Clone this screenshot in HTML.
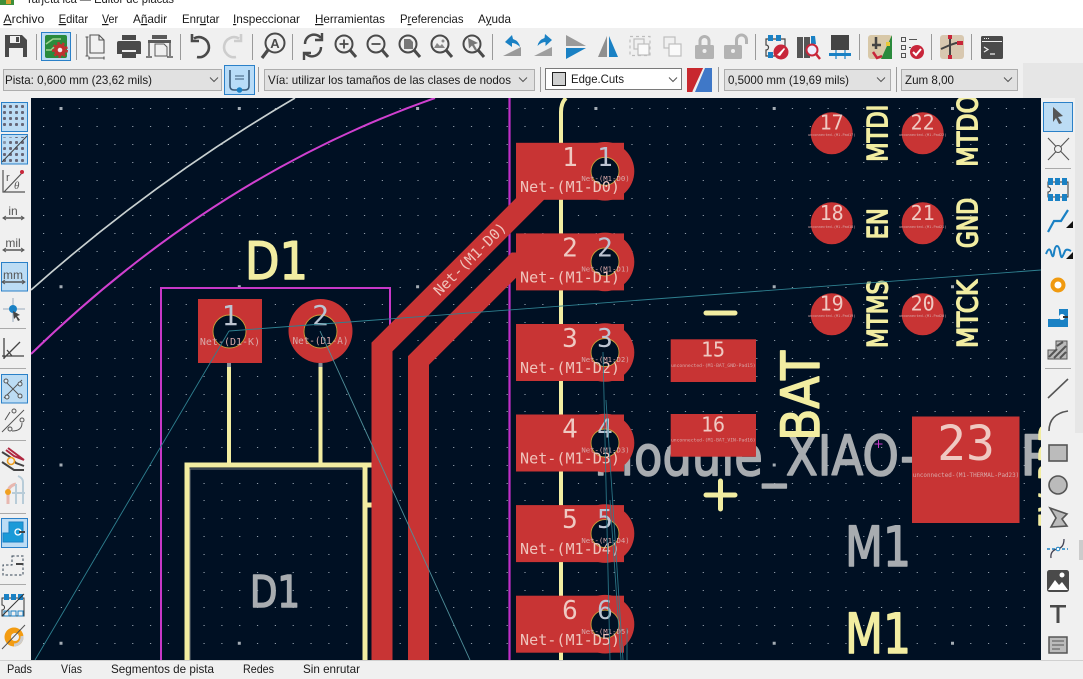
<!DOCTYPE html>
<html lang="es"><head><meta charset="utf-8"><title>Editor de placas</title>
<style>
html,body{margin:0;padding:0;width:1083px;height:679px;overflow:hidden;background:#f0f0f0}
svg{display:block}
.ui{font-family:"Liberation Sans",sans-serif;font-size:12px;fill:#1a1a1a}
.m{font-family:"DejaVu Sans Mono","Liberation Mono",monospace}
.s{font-family:"DejaVu Sans","Liberation Sans",sans-serif;stroke-linejoin:round}
.y{fill:#f2eda1;stroke:#f2eda1;stroke-width:1.500}
.g{fill:#a8acb0;stroke:#a8acb0;stroke-width:1.600}
.pn{fill:#efc9c2}.pg{fill:#bcc4d2}.nt{fill:#efc4bc}.ns{fill:#d9a9a9}
</style></head><body>
<svg width="1083" height="679" viewBox="0 0 1083 679" xmlns="http://www.w3.org/2000/svg">
<defs>
<pattern id="dots" patternUnits="userSpaceOnUse" x="3" y="105" width="6" height="6"><rect width="3" height="3" rx="1" fill="#667"/></pattern>
<clipPath id="cv"><rect x="31" y="98" width="1010" height="562"/></clipPath>
<g id="pad"><rect x="516" y="-28.5" width="108" height="57" fill="#c83434"/><circle cx="605" cy="0" r="29.3" fill="#c83434"/></g>
<g id="hole"><circle cx="605" cy="0" r="14" fill="#001023" stroke="#c8a03c" stroke-width=".9"/></g>
</defs>

<!-- window chrome -->
<rect width="1083" height="679" fill="#f0f0f0"/>
<rect width="1083" height="28" fill="#fff"/>
<rect x="0" y="0" width="14" height="5" fill="#3f8f3a"/><rect x="6" y="0" width="5" height="4" fill="#d8a030"/>
<text class="ui" x="26" y="3" font-size="12" textLength="148" lengthAdjust="spacingAndGlyphs">Tarjeta lca — Editor de placas</text>
<rect x="1023" y="63" width="60" height="35" fill="#e6e6e6"/>

<text class="ui" x="3.4" y="23" textLength="41" lengthAdjust="spacingAndGlyphs"><tspan text-decoration="underline">A</tspan>rchivo</text>
<text class="ui" x="58.6" y="23" textLength="29.5" lengthAdjust="spacingAndGlyphs"><tspan text-decoration="underline">E</tspan>ditar</text>
<text class="ui" x="102" y="23" textLength="16" lengthAdjust="spacingAndGlyphs"><tspan text-decoration="underline">V</tspan>er</text>
<text class="ui" x="133" y="23" textLength="34" lengthAdjust="spacingAndGlyphs">A<tspan text-decoration="underline">ñ</tspan>adir</text>
<text class="ui" x="182" y="23" textLength="37.5" lengthAdjust="spacingAndGlyphs">Enr<tspan text-decoration="underline">u</tspan>tar</text>
<text class="ui" x="233" y="23" textLength="67" lengthAdjust="spacingAndGlyphs"><tspan text-decoration="underline">I</tspan>nspeccionar</text>
<text class="ui" x="315" y="23" textLength="70" lengthAdjust="spacingAndGlyphs"><tspan text-decoration="underline">H</tspan>erramientas</text>
<text class="ui" x="400" y="23" textLength="63.5" lengthAdjust="spacingAndGlyphs">P<tspan text-decoration="underline">r</tspan>eferencias</text>
<text class="ui" x="478" y="23" textLength="33" lengthAdjust="spacingAndGlyphs">A<tspan text-decoration="underline">y</tspan>uda</text>

<!-- top toolbar row 1 -->
<g fill="none" stroke="#9a9a9a" stroke-width="1">
<path d="M36.500 34V60M76.500 34V60M180.500 34V60M252.500 34V60M292.500 34V60M492.500 34V60M755.500 34V60M859.500 34V60M931.500 34V60M971.500 34V60"/>
</g>
<path d="M5 35h17l5 5v17H5z" fill="#4a4a4a"/><path d="M10 36h10v7H10z" fill="#f0f0f0"/><rect x="16" y="37" width="3" height="5" fill="#4a4a4a"/><rect x="9" y="48" width="14" height="9" fill="#f0f0f0"/>
<rect x="41.500" y="32.500" width="29" height="28" fill="#bcdcf4" stroke="#2a80c8"/>
<rect x="45" y="35" width="22" height="23" rx="2" fill="#2a8a3c"/><path d="M46 44l7-5h8M46 50l5 0 3-3" stroke="#9fd08f" fill="none" stroke-width="1.500"/><circle cx="60" cy="50" r="6" fill="#c03030"/><circle cx="60" cy="50" r="7" fill="none" stroke="#c03030" stroke-width="2" stroke-dasharray="2.500 2.500"/><circle cx="60" cy="50" r="2.300" fill="#eee"/>
<g fill="none" stroke="#555" stroke-width="1.100"><path d="M90 35h9l5 5v13H90zM99 35v5h5"/><path d="M87 37V56M85.500 37h3M85.500 56h3M89 58h15M89 56.500v3M104 56.500v3"/></g>
<path d="M117 43q0-2 2-2h20q2 0 2 2v11h-5v-4h-14v4h-5z" fill="#4a4a4a"/><rect x="122" y="35" width="14" height="5" fill="#4a4a4a"/><rect x="122" y="52" width="14" height="6" fill="#4a4a4a"/>
<path d="M148 40h23v3h-23zM152 35h15v4h-15z" fill="#5a5a5a"/><path d="M149 43v13M170 43v13M146 57h6M167 57h6" stroke="#5a5a5a" fill="none" stroke-width="1.500"/><path d="M155 44h9l3 3v9h-12z" fill="#f0f0f0" stroke="#5a5a5a"/>
<g fill="none" stroke-width="2.600"><path d="M194 38.500A10 10 0 1 1 197 57" stroke="#4a4a4a"/><path d="M192 34v7h7" stroke="#4a4a4a"/><path d="M239 38.500A10 10 0 1 0 236 57" stroke="#cdcdcd"/><path d="M241 34v7h-7" stroke="#cdcdcd"/></g>
<g fill="none" stroke="#4a4a4a"><circle cx="275" cy="43" r="9.500" stroke-width="2"/><path d="M268 50l-6 8" stroke-width="3.200"/></g><text x="275" y="48" text-anchor="middle" font-family="Liberation Sans" font-weight="bold" font-size="13" fill="#4a4a4a">A</text>
<g fill="none" stroke="#4a4a4a" stroke-width="2.400"><path d="M305 44a9 9 0 0 1 16-6M321 47a9 9 0 0 1-16 6"/><path d="M322 33v7h-7M304 60v-7h7"/></g>
<g fill="none" stroke="#4a4a4a"><g stroke-width="2"><circle cx="344" cy="44" r="8.500"/><circle cx="376" cy="44" r="8.500"/><circle cx="408" cy="44" r="8.500"/><circle cx="440" cy="44" r="8.500"/><circle cx="472" cy="44" r="8.500"/></g><path d="M350 50l6 7M382 50l6 7M414 50l6 7M446 50l6 7M478 50l6 7" stroke-width="3"/><path d="M339.500 44h9M344 39.500v9M371.500 44h9" stroke-width="1.800"/></g>
<path d="M404 39h6l3 3v7h-9z" fill="#777"/><path d="M434 48l3-5 3 3 2-2 3 4z" fill="#888"/><circle cx="443" cy="41" r="1.500" fill="#888"/><path d="M468 38l10 5-4 1.500 3 5-2 1-3-5-3 3z" fill="#777"/>
<path d="M503 56l18-9v9z" fill="#9a9a9a"/><path d="M505 42l7-7 1 4q6 2 7 8-4-4-8-4v4z" fill="#1a81c4"/>
<path d="M534 56l18-9v9z" fill="#9a9a9a" opacity=".95"/><path d="M552 40l-7-6-.500 4q-6 2-7 8 4-4 8-4l0 4z" fill="#1a81c4"/>
<path d="M566 35l20 11h-20z" fill="#9a9a9a"/><path d="M566 48h20l-20 11z" fill="#1a81c4"/>
<path d="M607 36l-9 21h9z" fill="#8f8f8f"/><path d="M609 36l9 21h-9z" fill="#1a81c4"/>
<g fill="#fafafa" stroke="#bdbdbd" stroke-width="1.200"><rect x="630" y="36.500" width="20" height="19" stroke-dasharray="3 3" fill="none"/><rect x="634" y="39" width="10" height="10" fill="none"/><rect x="638" y="44" width="11" height="11"/><rect x="664" y="37" width="11" height="11" fill="none"/><rect x="669" y="44" width="12" height="12"/></g>
<g fill="#b3b3b3"><rect x="695" y="45" width="19" height="14" rx="1.500"/><path d="M698.500 45v-4a6 6 0 0 1 12 0v4h-3v-4a3 3 0 0 0-6 0v4z"/><rect x="724" y="45" width="18" height="14" rx="1.500"/><path d="M735 45v-5a6.500 6.500 0 0 1 13 0v4h-3v-4a3.500 3.500 0 0 0-7 0v5z"/></g><circle cx="704.500" cy="51" r="2" fill="#f0f0f0"/><circle cx="733" cy="51" r="2" fill="#f0f0f0"/>
<path d="M766 39h19v17h-19v-6a2 2 0 0 0 0-5z" fill="none" stroke="#444" stroke-width="1.200"/><g fill="#1a81c4"><rect x="768" y="35" width="5" height="6"/><rect x="776" y="35" width="5" height="6"/><rect x="768" y="52" width="5" height="6"/></g><circle cx="781" cy="52" r="7.500" fill="#c8263a"/><path d="M777 55l7-7 1 1-5 7z" fill="#fff"/>
<path d="M797 37h6v21h-6zM804 37h6v21h-6z" fill="#555"/><path d="M811 36l4 0 1 8h-5z" fill="#1a81c4"/><circle cx="812" cy="50" r="5.500" fill="#eef" stroke="#c8263a" stroke-width="2"/><path d="M816 54l4 5" stroke="#c8263a" stroke-width="2.500"/>
<path d="M831 35h18v15h-18z" fill="#444"/><rect x="829" y="53" width="22" height="3" fill="#1a81c4"/><path d="M836 50v9M845 50v9" stroke="#1a81c4" stroke-width="1.200"/>
<rect x="868" y="35" width="24" height="24" rx="3" fill="#d8c8a8"/><path d="M881 59l11-24v24z" fill="#2a8a3c"/><rect x="886" y="42" width="4" height="4" fill="#e8c838"/><path d="M876 37v12M872 45h9" stroke="#444" stroke-width="2.500"/><path d="M873 52l4 6 5-2" stroke="#c8263a" fill="none" stroke-width="2.500"/>
<g fill="none" stroke="#555"><rect x="901.500" y="37.500" width="4" height="4"/><rect x="901.500" y="45.500" width="4" height="4"/><rect x="901.500" y="53.500" width="4" height="4"/><path d="M909 39.500h8M909 47.500h2"/></g><circle cx="917" cy="52" r="7" fill="#c8263a"/><path d="M913 52l3 3 5-6" stroke="#fff" fill="none" stroke-width="2"/>
<rect x="940" y="35" width="24" height="24" rx="3" fill="#d8c8b0"/><path d="M950 38v18M941 49l9-4 6-2h6" stroke="#444" stroke-width="2" fill="none"/><rect x="948" y="35" width="4" height="4" fill="#c8263a"/><rect x="957" y="41" width="6" height="4" fill="#c8263a"/><rect x="948" y="55" width="4" height="4" fill="#c8263a"/>
<rect x="981" y="36" width="22" height="23" rx="1.500" fill="#4a4a4a"/><rect x="982" y="41" width="20" height="1" fill="#eee"/><path d="M984 47l4 2.500-4 2.500M990 54h5" stroke="#eee" fill="none" stroke-width="1.200"/><path d="M984 38.500h5" stroke="#eee" stroke-dasharray="1 1"/>

<!-- row 2 -->
<g fill="#e1e1e1" stroke="#adadad"><rect x="3.500" y="69.500" width="218" height="21"/><rect x="264.500" y="69.500" width="270" height="21"/><rect x="724.500" y="69.500" width="166" height="21"/><rect x="901.500" y="69.500" width="116" height="21"/></g>
<rect x="545.500" y="68.500" width="136" height="21" fill="#fff" stroke="#7a7a7a"/>
<rect x="552.500" y="72.500" width="13" height="13" fill="#cfd0d0" stroke="#222"/>
<g fill="none" stroke="#555" stroke-width="1"><path d="M210 77.500l4 4 4-4M519 77.500l4 4 4-4M669 77.500l4 4 4-4M877 77.500l4 4 4-4M1004 77.500l4 4 4-4"/></g>
<text class="ui" x="5" y="84" textLength="147" lengthAdjust="spacingAndGlyphs">Pista: 0,600 mm (23,62 mils)</text>
<text class="ui" x="268" y="84" textLength="243" lengthAdjust="spacingAndGlyphs">Vía: utilizar los tamaños de las clases de nodos</text>
<text class="ui" x="571" y="83" textLength="53" lengthAdjust="spacingAndGlyphs">Edge.Cuts</text>
<text class="ui" x="728" y="84" textLength="121" lengthAdjust="spacingAndGlyphs">0,5000 mm (19,69 mils)</text>
<text class="ui" x="905" y="84" textLength="49" lengthAdjust="spacingAndGlyphs">Zum 8,00</text>
<rect x="224.500" y="65.500" width="30" height="29" fill="#b8dcf8" stroke="#2a80c8"/>
<path d="M230 70v16q0 4 4 4h11q4 0 4-4V70" fill="none" stroke="#3a5a78" stroke-width="1.600"/><path d="M235 76h9M235 79h9" stroke="#3a5a78"/><circle cx="239.500" cy="90" r="2.800" fill="#1a81c4"/>
<path d="M258.500 67v25M718.500 67v25M896.500 67v25M540.500 67v25" stroke="#9a9a9a"/>
<path d="M687 68h17l-11 24h-6z" fill="#c8282e"/><path d="M705 68h7v24h-17z" fill="#3f78c8"/><path d="M704 68l-11 24" stroke="#eee" stroke-width="1.600"/>

<!-- canvas -->
<g clip-path="url(#cv)">
<rect x="31" y="98" width="1010" height="562" fill="#001023"/>
<path fill="none" stroke="#8f9ba8" stroke-width="1" stroke-dasharray="1.200 16.630" d="M43 108.500H1041M43 126.500H1041M43 144.500H1041M43 162.500H1041M43 180.500H1041M43 198.500H1041M43 215.500H1041M43 233.500H1041M43 251.500H1041M43 269.500H1041M43 287.500H1041M43 304.500H1041M43 322.500H1041M43 340.500H1041M43 358.500H1041M43 376.500H1041M43 394.500H1041M43 411.500H1041M43 429.500H1041M43 447.500H1041M43 465.500H1041M43 483.500H1041M43 500.500H1041M43 518.500H1041M43 536.500H1041M43 554.500H1041M43 572.500H1041M43 590.500H1041M43 607.500H1041M43 625.500H1041M43 643.500H1041"/>
<path fill="none" stroke="#a4acb4" stroke-width="3" stroke-dasharray="3 175.300" d="M59.500 108.500H1041M59.500 286.800H1041M59.500 465H1041M59.500 643.300H1041"/>

<path d="M31 290Q155 180 295 98" fill="none" stroke="#c8d0d0" stroke-width="1.700"/>
<path d="M31 354Q215 175 435 98" fill="none" stroke="#d040d0" stroke-width="2"/>
<path d="M509.500 98V660" stroke="#c030c8" stroke-width="2.200"/>
<path d="M161 660V288H390V340" fill="none" stroke="#c838c8" stroke-width="2"/>

<!-- fab -->
<path d="M561 660V112q0-9 5-14" fill="none" stroke="#f2eda1" stroke-width="4"/>
<text class="s g" x="594" y="475" font-size="55" textLength="323" lengthAdjust="spacingAndGlyphs">Module_XIAO-</text>
<text class="s g" x="1020" y="475" font-size="55">R</text>
<text class="s g" x="845" y="566" font-size="55" textLength="66" lengthAdjust="spacingAndGlyphs">M1</text>
<text class="s g" x="250" y="607" font-size="44" textLength="50" lengthAdjust="spacingAndGlyphs">D1</text>

<!-- D1 silks -->
<path d="M229 363V463M320.500 363V463" stroke="#f2eda1" stroke-width="4"/>
<path d="M229 363v4M320.500 363v4" stroke="#8a9098" stroke-width="4"/>
<path d="M187 660V465H372M365 465V660M365 505h8" fill="none" stroke="#f2eda1" stroke-width="5"/>
<path d="M190 660V469H362" fill="none" stroke="#6d7378" stroke-width="1"/>
<text class="s y" x="245" y="279" font-size="52" textLength="63" lengthAdjust="spacingAndGlyphs">D1</text>
<text class="s y" x="845" y="653" font-size="55" textLength="66" lengthAdjust="spacingAndGlyphs">M1</text>

<!-- tracks -->
<path d="M382 660V347L552 177" fill="none" stroke="#c83434" stroke-width="21"/>
<path d="M418.500 660V360.500L516 263H530" fill="none" stroke="#c83434" stroke-width="21"/>

<!-- pads -->
<use href="#pad" y="171.300"/><use href="#pad" y="261.900"/><use href="#pad" y="352.500"/><use href="#pad" y="443"/><use href="#pad" y="533.600"/><use href="#pad" y="624.200"/>
<use href="#hole" y="171.300"/><use href="#hole" y="261.900"/><use href="#hole" y="352.500"/><use href="#hole" y="443"/><use href="#hole" y="533.600"/><use href="#hole" y="624.200"/>

<rect x="198" y="299" width="64" height="64" fill="#c83434"/><circle cx="320.500" cy="331" r="32" fill="#c83434"/>
<circle cx="229.500" cy="331.500" r="16.500" fill="#001023" stroke="#c8a03c" stroke-width=".9"/><circle cx="320.500" cy="331.500" r="16.500" fill="#001023" stroke="#c8a03c" stroke-width=".9"/>

<rect x="670.700" y="339.300" width="85.300" height="42.700" fill="#c83434"/><rect x="670.700" y="414" width="85.300" height="42.700" fill="#c83434"/>
<rect x="912" y="416.500" width="107.500" height="106.500" fill="#c83434"/>
<g fill="#c83434"><circle cx="831.700" cy="133.300" r="21"/><circle cx="922.700" cy="133.300" r="21"/><circle cx="831.700" cy="223.300" r="21"/><circle cx="922.700" cy="223.300" r="21"/><circle cx="831.700" cy="314.300" r="21"/><circle cx="922.700" cy="314.300" r="21"/></g>

<!-- pad text -->
<g class="m" text-anchor="middle">
<g font-size="26">
<text class="pn" x="570" y="166">1</text><text class="pg" x="605" y="166">1</text>
<text class="pn" x="570" y="256.500">2</text><text class="pg" x="605" y="256.500">2</text>
<text class="pn" x="570" y="347">3</text><text class="pg" x="605" y="347">3</text>
<text class="pn" x="570" y="437.500">4</text><text class="pg" x="605" y="437.500">4</text>
<text class="pn" x="570" y="528">5</text><text class="pg" x="605" y="528">5</text>
<text class="pn" x="570" y="619">6</text><text class="pg" x="605" y="619">6</text>
</g>
<g font-size="15.100" class="nt">
<text x="570" y="192">Net-(M1-D0)</text><text x="570" y="282.500">Net-(M1-D1)</text><text x="570" y="373">Net-(M1-D2)</text><text x="570" y="463.500">Net-(M1-D3)</text><text x="570" y="554">Net-(M1-D4)</text><text x="570" y="645">Net-(M1-D5)</text>
</g>
<g font-size="7.300" class="ns">
<text x="605.500" y="181">Net-(M1-D0)</text><text x="605.500" y="271.500">Net-(M1-D1)</text><text x="605.500" y="362">Net-(M1-D2)</text><text x="605.500" y="452.500">Net-(M1-D3)</text><text x="605.500" y="543">Net-(M1-D4)</text><text x="605.500" y="634">Net-(M1-D5)</text>
</g>
<g font-size="28" class="pg"><text x="230" y="325">1</text><text x="320.500" y="325">2</text></g>
<text class="ns" x="230" y="345" font-size="10">Net-(D1-K)</text><text class="ns" x="320.500" y="344" font-size="9.300">Net-(D1-A)</text>
<text class="pn" x="713" y="356.700" font-size="20">15</text><text class="pn" x="713" y="431.700" font-size="20">16</text>
<text class="ns" x="713.300" y="367" font-size="4.700">unconnected-(M1-BAT_GND-Pad15)</text><text class="ns" x="713.300" y="441.700" font-size="4.700">unconnected-(M1-BAT_VIN-Pad16)</text>
<text class="pn" x="966" y="460" font-size="48">23</text>
<text class="ns" x="966" y="477" font-size="5.900">unconnected-(M1-THERMAL-Pad23)</text>
<g class="pn" font-size="20"><text x="831.700" y="129.300">17</text><text x="922.700" y="129.300">22</text><text x="831.700" y="220">18</text><text x="922.700" y="220">21</text><text x="831.700" y="310.700">19</text><text x="922.700" y="310.700">20</text></g>
<g class="ns" font-size="3.600"><text x="831.700" y="136">unconnected-(M1-Pad17)</text><text x="922.700" y="136">unconnected-(M1-Pad22)</text><text x="831.700" y="228">unconnected-(M1-Pad18)</text><text x="922.700" y="228">unconnected-(M1-Pad21)</text><text x="831.700" y="317">unconnected-(M1-Pad19)</text><text x="922.700" y="317">unconnected-(M1-Pad20)</text></g>
<text class="nt" font-size="14.500" transform="translate(470,259) rotate(-45)" y="5">Net-(M1-D0)</text>
</g>

<!-- rotated silks -->
<g class="s y">
<text transform="translate(887,161.700) rotate(-90)" font-size="28" textLength="57" lengthAdjust="spacingAndGlyphs">MTDI</text>
<text transform="translate(977,166.700) rotate(-90)" font-size="28" textLength="72" lengthAdjust="spacingAndGlyphs">MTDO</text>
<text transform="translate(887,239.300) rotate(-90)" font-size="28" textLength="31" lengthAdjust="spacingAndGlyphs">EN</text>
<text transform="translate(977,248) rotate(-90)" font-size="28" textLength="50" lengthAdjust="spacingAndGlyphs">GND</text>
<text transform="translate(887,348) rotate(-90)" font-size="28" textLength="68" lengthAdjust="spacingAndGlyphs">MTMS</text>
<text transform="translate(977,348) rotate(-90)" font-size="28" textLength="68" lengthAdjust="spacingAndGlyphs">MTCK</text>
<text transform="translate(819,441) rotate(-90)" font-size="53" textLength="90" lengthAdjust="spacingAndGlyphs">BAT</text>
<text transform="translate(1067,528) rotate(-90)" font-size="38" textLength="106" lengthAdjust="spacingAndGlyphs">5V_RDD</text>
</g>
<path d="M706 313h29M706 495h29M720.500 481v28" stroke="#f2eda1" stroke-width="5" stroke-linecap="round"/>
<path d="M878.500 440v8M874.500 444h8" stroke="#c838c8" stroke-width="1"/>

<!-- ratsnest -->
<g fill="none" stroke="#2e8090" stroke-width=".9">
<path d="M229 331L1041 270M229 331L35 660"/><path d="M320 331L470 660" stroke="#4f8f9a"/>
<path d="M603 352L610 660M606 400L623 660M610 500L621 660M627 628V660" opacity=".9"/>
</g>
</g>

<!-- left toolbar -->
<rect x="0" y="98" width="31" height="562" fill="#f0f0f0"/>
<g fill="#bcdcf4" stroke="#2a80c8"><rect x="1.500" y="102.500" width="26" height="29"/><rect x="1.500" y="134.500" width="26" height="29.500"/><rect x="1.500" y="262.500" width="26" height="28.500"/><rect x="1.500" y="374.500" width="26" height="28.500"/><rect x="1.500" y="518.500" width="26" height="29"/></g>
<rect x="2" y="105" width="24" height="24" fill="url(#dots)"/>
<rect x="3" y="137" width="24" height="25" fill="url(#dots)"/><path d="M2 162L27 136" stroke="#444"/><path d="M2 136h12L2 150z" fill="#bcdcf4" opacity=".4"/>
<path d="M3 170v22h22M23 172L4 192" stroke="#555" fill="none" stroke-width="1.200"/><circle cx="22" cy="172" r="2" fill="#c8263a"/><text x="6" y="181" font-family="Liberation Sans" font-size="11" fill="#555">r</text><text x="14" y="189" font-family="Liberation Serif" font-style="italic" font-size="11" fill="#555">θ</text>
<g font-family="Liberation Sans" text-anchor="middle" fill="#555"><text x="13" y="215" font-size="12">in</text><text x="13" y="247" font-size="12">mil</text><text x="13" y="279" font-size="12">mm</text></g>
<path d="M4 218h19M4 250h19M3 282h21" stroke="#555" stroke-width="1.400"/><path d="M6 216l-3 2 3 2M21 216l3 2-3 2M6 248l-3 2 3 2M21 248l3 2-3 2M5 280l-3 2 3 2M22 280l3 2-3 2" stroke="#555" fill="none"/>
<path d="M13 298v24M3 309h22" stroke="#9ab" stroke-width="1"/><circle cx="13" cy="309" r="4" fill="#1a81c4"/><path d="M13 311l7 4-3 1 3 4-2 1-2-4-2 2z" fill="#444"/>
<g stroke="#aaa"><path d="M0 328.500H26M0 368.500H26M0 440.500H26M0 513.500H26M0 584.500H26"/></g>
<path d="M4 338v21M2 356h22M4 358l16-16M7 350l5 6" stroke="#444" fill="none" stroke-width="1.300"/>
<path d="M4 380l18 18M22 380L4 398" stroke="#555" fill="none"/><g fill="#dcecf8" stroke="#555"><circle cx="6" cy="381" r="2"/><circle cx="20" cy="384" r="2"/><circle cx="7" cy="397" r="2"/><circle cx="20" cy="396" r="2"/></g>
<path d="M2 432L24 410" stroke="#555"/><path d="M5 420l5-8M12 431q10 0 10-8" stroke="#555" fill="none"/><circle cx="14" cy="411" r="2" fill="none" stroke="#555"/><circle cx="22" cy="420" r="2" fill="none" stroke="#555"/><circle cx="10" cy="429" r="2" fill="none" stroke="#555"/>
<path d="M2 452l8 5 6 6 8 3M2 462l6 4 6 4h10" stroke="#444" fill="none" stroke-width="2"/><path d="M6 450l8 6 10 4M8 448l16 12" stroke="#b02840" fill="none" stroke-width="2"/><circle cx="11" cy="461" r="3.500" fill="#eee" stroke="#f0a020" stroke-width="1.600"/>
<path d="M8 504v-11q0-7 8-9" stroke="#e8b8b0" stroke-width="3" fill="none"/><path d="M16 504V484M23 504V482q0-4-5-6M12 493h13" stroke="#b8ccd8" stroke-width="2" fill="none"/><circle cx="8" cy="492" r="3" fill="#f0a020"/>
<path d="M3 542v-9h6v-11h14v20z" fill="#1a9ad8" stroke="#1a81c4"/><circle cx="18" cy="532" r="3" fill="none" stroke="#fff" stroke-width="1.300"/><rect x="19" y="531" width="6" height="2" fill="#444"/>
<path d="M12 556h11v19H3v-10h9z" fill="none" stroke="#345" stroke-dasharray="2.500 2"/><path d="M16 564h7" stroke="#444" stroke-width="2"/>
<path d="M2 598h22v18H2v-6a2 2 0 0 0 0-5z" fill="none" stroke="#333"/><g fill="#1a81c4"><rect x="4" y="594" width="5" height="6"/><rect x="11" y="594" width="5" height="6"/><rect x="18" y="594" width="5" height="6"/></g><g fill="none" stroke="#1a81c4"><rect x="4" y="611" width="5" height="5"/><rect x="11" y="611" width="5" height="5"/><rect x="18" y="611" width="5" height="5"/></g><path d="M2 616L24 594" stroke="#333"/>
<circle cx="14" cy="637" r="9.500" fill="#f39c12"/><circle cx="15" cy="637" r="4" fill="#eee"/><path d="M14 645a8 8 0 0 0 8-9" stroke="#ccc" fill="none" stroke-width="3"/><path d="M2 649L25 625" stroke="#555"/>

<!-- right toolbar -->
<rect x="1041" y="98" width="42" height="562" fill="#f0f0f0"/><rect x="1075" y="98" width="8" height="335" fill="#e6e6e6"/>
<rect x="1079" y="540" width="4" height="20" fill="#ccc"/>
<rect x="1043.500" y="102.500" width="29" height="29" fill="#bcdcf4" stroke="#2a80c8"/>
<path d="M1053 107l10 9-5 1 4 6-3 1-3-6-3 4z" fill="#555"/>
<path d="M1048 138l21 22M1069 138l-21 22" stroke="#555" stroke-width="1.100"/><circle cx="1058" cy="149" r="3.500" fill="#f0f0f0" stroke="#555"/>
<path d="M1045 168.500H1071M1045 368.500H1071" stroke="#aaa"/>
<path d="M1048 182h20v15h-20v-5a2.500 2.500 0 0 0 0-5z" fill="none" stroke="#333"/><g fill="#1a81c4"><rect x="1048" y="178" width="5" height="7"/><rect x="1055" y="178" width="5" height="7"/><rect x="1062" y="178" width="5" height="7"/><rect x="1048" y="194" width="5" height="7"/><rect x="1055" y="194" width="5" height="7"/><rect x="1062" y="194" width="5" height="7"/></g>
<path d="M1048 232l6-11h7l7-11" fill="none" stroke="#1a81c4" stroke-width="2.200"/><path d="M1073 228v-7l-7 7zM1073 259v-7l-7 7z" fill="#111"/>
<path d="M1046 254q3-8 5-2 2 8 3 1t3-7 3 6 2 5 3-6q1-2 4-1l2 1" fill="none" stroke="#1a81c4" stroke-width="2"/>
<circle cx="1058" cy="285" r="5.500" fill="#fff" stroke="#f09a10" stroke-width="4"/>
<path d="M1048 327v-8h11v-10h9v18z" fill="#1a81c4"/><circle cx="1062" cy="317" r="3" fill="#fff"/><rect x="1063" y="316" width="5" height="2" fill="#333"/>
<path d="M1048 359v-9h8v-9h11v18z" fill="#bbb" stroke="#555"/><path d="M1049 357l8-8M1054 358l12-12M1060 358l6-6M1057 346l6-4" stroke="#555" stroke-width="2"/>
<path d="M1048 398l20-19" stroke="#555" stroke-width="1.600"/>
<path d="M1049 431q0-17 19-20" fill="none" stroke="#555" stroke-width="1.600"/>
<rect x="1049" y="445" width="18" height="16" fill="#bbb" stroke="#555" stroke-width="1.600"/>
<circle cx="1058" cy="485" r="9" fill="#bbb" stroke="#555" stroke-width="1.600"/>
<path d="M1050 508l17 6-5 5 5 7-16 1 5-9z" fill="#bbb" stroke="#555" stroke-width="1.600"/>
<path d="M1047 549h21" stroke="#1a81c4" stroke-width="1.500" stroke-dasharray="3 2"/><path d="M1051 558q-1-7 6-9 7-1 7-10" fill="none" stroke="#445" stroke-width="1.300"/><circle cx="1058" cy="549" r="1.800" fill="#fff" stroke="#1a81c4"/>
<rect x="1047" y="570" width="22" height="22" rx="2.500" fill="#4a4a4a"/><path d="M1048 590l7-10 4 5 3-3 6 8z" fill="#fff"/><circle cx="1062" cy="575" r="2.500" fill="#fff"/>
<path d="M1050 605h16v2.500h-6.500V623h-3V607.500H1050z" fill="#4a4a4a"/>
<rect x="1049" y="637" width="18" height="16" fill="#bbb" stroke="#555" stroke-width="1.500"/><path d="M1052 641h12M1052 645h12M1052 649h8" stroke="#555"/>

<!-- status bar -->
<rect x="0" y="660" width="1083" height="19" fill="#f0f0f0"/><path d="M0 660.500H1083" stroke="#d0d0d0"/>
<text class="ui" x="7" y="673" textLength="25" lengthAdjust="spacingAndGlyphs">Pads</text>
<text class="ui" x="61" y="673" textLength="21" lengthAdjust="spacingAndGlyphs">Vías</text>
<text class="ui" x="111" y="673" textLength="103" lengthAdjust="spacingAndGlyphs">Segmentos de pista</text>
<text class="ui" x="243" y="673" textLength="31" lengthAdjust="spacingAndGlyphs">Redes</text>
<text class="ui" x="303" y="673" textLength="57" lengthAdjust="spacingAndGlyphs">Sin enrutar</text>
</svg>
</body></html>
